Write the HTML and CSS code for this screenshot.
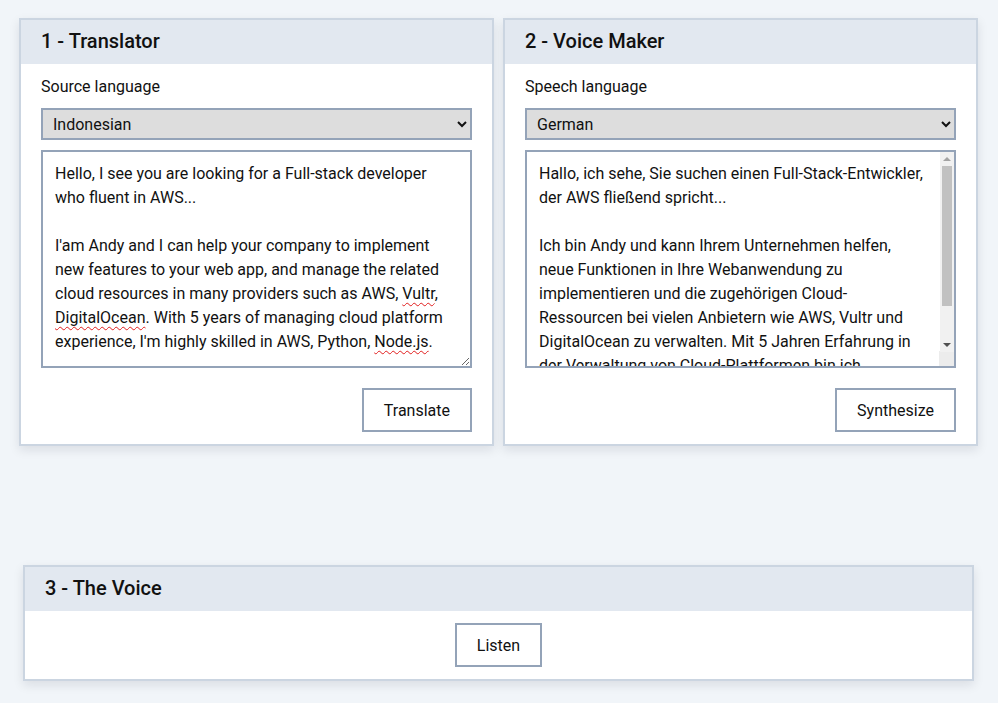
FILE: index.html
```html
<!DOCTYPE html>
<html lang="en">
<head>
<meta charset="utf-8">
<title>Translator &amp; Voice Maker</title>
<link rel="stylesheet" href="styles.css">
</head>
<body>
<main class="page">
  <div class="top-row">
    <section class="card">
      <header class="card-head"><h2>1 - Translator</h2></header>
      <div class="card-body">
        <label class="field-label">Source language</label>
        <select class="select"><option>Indonesian</option></select>
        <div class="textbox-wrap">
          <div class="textbox">Hello, I see you are looking for a Full-stack developer
who fluent in AWS...

I'am Andy and I can help your company to implement
new features to your web app, and manage the related
cloud resources in many providers such as AWS, <span class="typo">Vultr</span>,
<span class="typo">DigitalOcean</span>. With 5 years of managing cloud platform
experience, I'm highly skilled in AWS, Python, <span class="typo">Node.js</span>.</div>
        </div>
        <div class="actions"><button class="btn">Translate</button></div>
      </div>
    </section>
    <section class="card">
      <header class="card-head"><h2>2 - Voice Maker</h2></header>
      <div class="card-body">
        <label class="field-label">Speech language</label>
        <select class="select"><option>German</option></select>
        <div class="textbox-wrap">
          <div class="textbox scroll">Hallo, ich sehe, Sie suchen einen Full-Stack-Entwickler,
der AWS fließend spricht...

Ich bin Andy und kann Ihrem Unternehmen helfen,
neue Funktionen in Ihre Webanwendung zu
implementieren und die zugehörigen Cloud-
Ressourcen bei vielen Anbietern wie AWS, Vultr und
DigitalOcean zu verwalten. Mit 5 Jahren Erfahrung in
der Verwaltung von Cloud-Plattformen bin ich
hochqualifiziert in AWS, Python, Node.js.</div>
          <div class="scrollbar" aria-hidden="true">
            <span class="sb-btn"><i class="arrow-up"></i></span>
            <span class="sb-track"><span class="sb-thumb"></span></span>
            <span class="sb-btn"><i class="arrow-down"></i></span>
          </div>
        </div>
        <div class="actions"><button class="btn">Synthesize</button></div>
      </div>
    </section>
  </div>
  <section class="card card-wide">
    <header class="card-head"><h2>3 - The Voice</h2></header>
    <div class="card-body center">
      <button class="btn">Listen</button>
    </div>
  </section>
</main>
</body>
</html>
```
FILE: styles.css
```css
* { box-sizing: border-box; }
html, body { margin: 0; padding: 0; }
body {
  background: #f1f5f9;
  font-family: Roboto, "Liberation Sans", sans-serif;
  color: #111;
  width: 998px;
  height: 703px;
  overflow: hidden;
}
.page {
  padding: 18px 20px 0 19px;
  display: flex;
  flex-direction: column;
  gap: 119px;
}
.top-row {
  display: grid;
  grid-template-columns: 1fr 1fr;
  gap: 9px;
}
.card {
  background: #fff;
  border: 2px solid #cbd5e1;
  box-shadow: 0 4px 10px rgba(15, 23, 42, 0.10);
}
.card-wide {
  margin: 0 4px 0 4px;
}
.card-head {
  background: #e2e8f0;
  padding: 9px 20px 11px;
}
.card-head h2 {
  margin: 0;
  font-size: 20px;
  font-weight: 500;
  line-height: 24px;
}
.card-body {
  padding: 12px 20px 12px;
  display: flex;
  flex-direction: column;
}
.card-body.center {
  align-items: center;
  padding: 12px 20px 12px;
}
.field-label {
  font-size: 16px;
  line-height: 22px;
}
.select {
  margin-top: 10px;
  height: 32px;
  border: 2px solid #94a3b8;
  border-radius: 0;
  background-color: #dddddd;
  font-family: Roboto, "Liberation Sans", sans-serif;
  font-size: 16px;
  color: #111;
  padding: 0 6px;
}
.textbox-wrap {
  position: relative;
  margin-top: 10px;
}
.textbox {
  height: 218px;
  border: 2px solid #94a3b8;
  padding: 10px 12px;
  font-size: 16px;
  line-height: 24px;
  white-space: pre-line;
  overflow: hidden;
  resize: vertical;
}
.textbox.scroll {
  padding-right: 26px;
}
.textbox.scroll::-webkit-resizer {
  background-color: #ececec;
}
.scrollbar {
  position: absolute;
  top: 2px;
  right: 2px;
  bottom: 16px;
  width: 14px;
  background: #f1f1f1;
  display: flex;
  flex-direction: column;
}
.sb-btn {
  height: 14px;
  display: flex;
  align-items: center;
  justify-content: center;
  flex: none;
}
.arrow-up {
  width: 0;
  height: 0;
  border-left: 4px solid transparent;
  border-right: 4px solid transparent;
  border-bottom: 4px solid #a3a3a3;
}
.arrow-down {
  width: 0;
  height: 0;
  border-left: 4px solid transparent;
  border-right: 4px solid transparent;
  border-top: 4px solid #505050;
}
.sb-track {
  flex: 1;
  padding: 0 2px;
}
.sb-thumb {
  display: block;
  height: 140px;
  background: #c1c1c1;
}
.typo {
  text-decoration: underline wavy #e11d1d;
  text-decoration-thickness: 1px;
  text-underline-offset: 3px;
}
.actions {
  margin-top: 20px;
  display: flex;
  justify-content: flex-end;
}
.btn {
  height: 44px;
  padding: 0 20px;
  background: #fff;
  border: 2px solid #94a3b8;
  border-radius: 0;
  font-family: Roboto, "Liberation Sans", sans-serif;
  font-size: 16px;
  color: #111;
}
```
